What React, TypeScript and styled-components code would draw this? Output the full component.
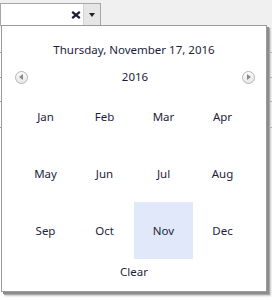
import React from 'react'
import styled, { createGlobalStyle } from 'styled-components'

const GlobalStyle = createGlobalStyle`
  body {
    margin: 0;
    background: #ffffff;
    font-family: "Noto Sans", "Open Sans", sans-serif;
  }
`

const Page = styled.div`
  position: relative;
  width: 272px;
  height: 300px;
  overflow: hidden;
  background: #ffffff;
`

const Toolbar = styled.div`
  height: 29px;
  background: #f0f0f0;
  padding-top: 3px;
  box-sizing: border-box;
`

const Combo = styled.div`
  display: flex;
  width: 101px;
  height: 23px;
  box-sizing: border-box;
  border: 1px solid #a7a7a7;
  background: #fff;
`

const ComboText = styled.div`
  flex: 1;
  display: flex;
  align-items: center;
  justify-content: flex-end;
  padding-right: 2px;
`

const DropButton = styled.div`
  width: 16px;
  background: #e6e6e6;
  border-left: 1px solid #d4d4d4;
  display: flex;
  align-items: center;
  justify-content: center;
`

const Caret = styled.span`
  width: 0;
  height: 0;
  border-left: 3.5px solid transparent;
  border-right: 3.5px solid transparent;
  border-top: 4px solid #222;
  margin-top: 1px;
`

const GridRow = styled.div<{ $h: number }>`
  height: ${p => p.$h}px;
  border-bottom: 1px solid #a0a0a0;
  box-sizing: border-box;
`

const Popup = styled.div`
  position: absolute;
  left: 1px;
  top: 25px;
  width: 266px;
  height: 267px;
  box-sizing: border-box;
  background: #fff;
  border: 1px solid #9a9a9a;
  box-shadow: 2px 2px 0 #8c8c8c, 3px 3px 1px #a8a8a8, 4px 4px 2px #d0d0d0;
  display: flex;
  flex-direction: column;
  align-items: center;
  color: #1e1e3c;
  font-size: 11.5px;
`

const Title = styled.div`
  margin-top: 16px;
  line-height: 16px;
  height: 16px;
`

const YearNav = styled.div`
  margin-top: 11px;
  width: 100%;
  height: 16px;
  display: flex;
  align-items: center;
  justify-content: space-between;
  padding: 0 11px 0 13px;
  box-sizing: border-box;
`

const Year = styled.span`
  line-height: 16px;
`

const NavButton = styled.div<{ $dir: 'left' | 'right' }>`
  width: 13px;
  height: 13px;
  box-sizing: border-box;
  border-radius: 50%;
  border: 1px solid #b4b4b4;
  background: linear-gradient(#fbfbfb, #e8e8e8);
  display: flex;
  align-items: center;
  justify-content: center;
  &::after {
    content: '';
    width: 0;
    height: 0;
    border-top: 3px solid transparent;
    border-bottom: 3px solid transparent;
    ${p => (p.$dir === 'left'
      ? 'border-right: 4px solid #8a8a8a; margin-right: 1px;'
      : 'border-left: 4px solid #8a8a8a; margin-left: 1px;')}
  }
`

const MonthGrid = styled.div`
  margin-top: 2px;
  display: grid;
  grid-template-columns: repeat(4, 59px);
  grid-template-rows: 58px 57px 57px;
`

const Month = styled.div<{ $selected?: boolean }>`
  display: flex;
  align-items: center;
  justify-content: center;
  background: ${p => (p.$selected ? '#e0e8fa' : 'transparent')};
`

const ClearLink = styled.div`
  margin-top: 5px;
  line-height: 16px;
`

const months = ['Jan', 'Feb', 'Mar', 'Apr', 'May', 'Jun', 'Jul', 'Aug', 'Sep', 'Oct', 'Nov', 'Dec']

export default function App() {
  return (
    <Page>
      <GlobalStyle />
      <Toolbar>
        <Combo>
          <ComboText>
            <svg width="10" height="8" viewBox="0 0 10 8">
              <path d="M1.2 0.8 L8.8 7.2 M8.8 0.8 L1.2 7.2" stroke="#1e1e32" strokeWidth="2.2" />
            </svg>
          </ComboText>
          <DropButton>
            <Caret />
          </DropButton>
        </Combo>
      </Toolbar>
      <GridRow $h={24} />
      <GridRow $h={25} />
      <GridRow $h={24} />
      <GridRow $h={26} />

      <Popup>
        <Title>Thursday, November 17, 2016</Title>
        <YearNav>
          <NavButton $dir="left" />
          <Year>2016</Year>
          <NavButton $dir="right" />
        </YearNav>
        <MonthGrid>
          {months.map(m => (
            <Month key={m} $selected={m === 'Nov'}>{m}</Month>
          ))}
        </MonthGrid>
        <ClearLink>Clear</ClearLink>
      </Popup>
    </Page>
  )
}
